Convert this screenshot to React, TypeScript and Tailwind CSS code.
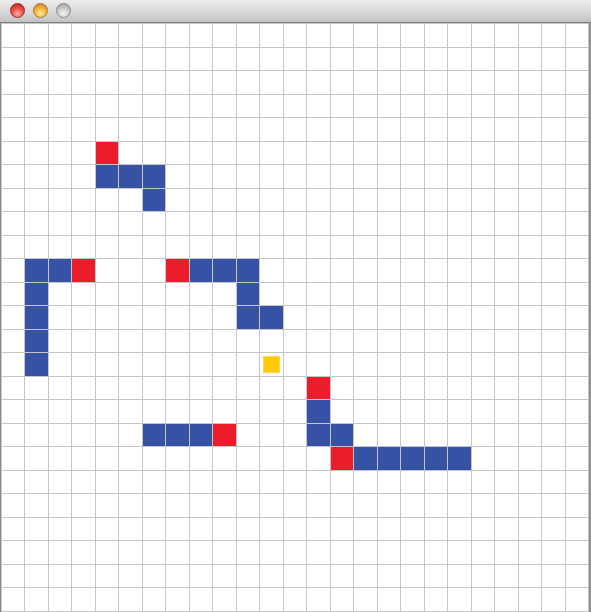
import React from "react";

type Kind = "B" | "R" | "Y";

const cells: Record<string, Kind> = {
  "5-4": "R",
  "6-4": "B",
  "6-5": "B",
  "6-6": "B",
  "7-6": "B",
  "10-1": "B",
  "10-2": "B",
  "10-3": "R",
  "10-7": "R",
  "10-8": "B",
  "10-9": "B",
  "10-10": "B",
  "11-1": "B",
  "11-10": "B",
  "12-1": "B",
  "12-10": "B",
  "12-11": "B",
  "13-1": "B",
  "14-1": "B",
  "14-11": "Y",
  "15-13": "R",
  "16-13": "B",
  "17-6": "B",
  "17-7": "B",
  "17-8": "B",
  "17-9": "R",
  "17-13": "B",
  "17-14": "B",
  "18-14": "R",
  "18-15": "B",
  "18-16": "B",
  "18-17": "B",
  "18-18": "B",
  "18-19": "B",
};

function Cell({ kind }: { kind?: Kind }) {
  if (kind === "B") return <div className="bg-[#3552a5]" />;
  if (kind === "R") return <div className="bg-[#ec1c2a]" />;
  if (kind === "Y")
    return (
      <div className="bg-white p-[3px]">
        <div className="w-full h-full bg-[#ffc907] border border-[#ffd94a]" />
      </div>
    );
  return <div className="bg-white" />;
}

function Light({ kind }: { kind: "red" | "yellow" | "gray" }) {
  const cls =
    kind === "red"
      ? "bg-[radial-gradient(circle_at_50%_75%,#ffb4a8_0%,#f0524a_45%,#c42a24_85%)] border-[#9c2a26]"
      : kind === "yellow"
      ? "bg-[radial-gradient(circle_at_50%_75%,#ffe9a0_0%,#f4b940_45%,#c9892a_85%)] border-[#a8772e]"
      : "bg-[radial-gradient(circle_at_50%_75%,#f4f4f4_0%,#cfcfcf_45%,#a4a4a4_85%)] border-[#8e8e8e]";
  return <div className={`w-[15px] h-[15px] rounded-full border ${cls}`} />;
}

export default function App() {
  const rows = [];
  for (let r = 0; r < 25; r++) {
    for (let c = 0; c < 25; c++) {
      rows.push(<Cell key={`${r}-${c}`} kind={cells[`${r}-${c}`]} />);
    }
  }
  return (
    <div className="w-[591px] h-[612px] overflow-hidden flex flex-col bg-white">
      <div className="h-[23px] shrink-0 border-b border-[#7e7e7e] bg-[linear-gradient(to_bottom,#ededed,#d6d6d6_60%,#c2c2c2)] flex items-center gap-[8px] pl-[10px] pb-px">
        <Light kind="red" />
        <Light kind="yellow" />
        <Light kind="gray" />
      </div>
      <div className="flex-1 flex min-h-0">
        <div className="w-px bg-[#8a8a8a]" />
        <div className="flex-1 grid grid-cols-[repeat(25,minmax(0,1fr))] grid-rows-[repeat(25,minmax(0,1fr))] gap-px p-px bg-[#c6c6c6]">
          {rows}
        </div>
        <div className="w-[2px] bg-[#8f8f8f]" />
      </div>
    </div>
  );
}
